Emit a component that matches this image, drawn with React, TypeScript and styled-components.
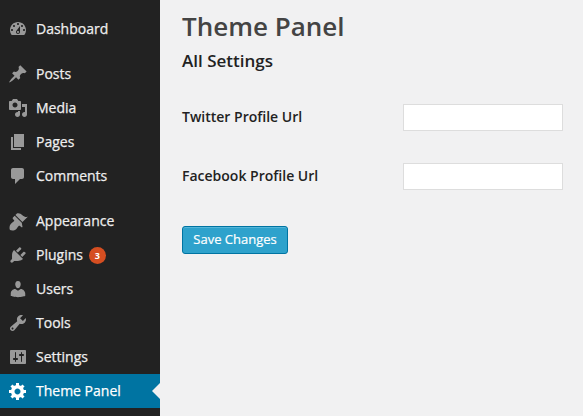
import React from 'react';
import styled, { createGlobalStyle } from 'styled-components';

const GlobalStyle = createGlobalStyle`
  html, body { margin: 0; padding: 0; height: 100%; background: #f1f1f2; overflow: hidden; }
  #root { height: 100%; }
  * { box-sizing: border-box; }
`;

const Layout = styled.div`
  display: flex;
  height: 416px;
  font-family: "Open Sans", "Liberation Sans", sans-serif;
`;

const Sidebar = styled.nav`
  width: 160px;
  flex-shrink: 0;
  padding-top: 12px;
  background: #222;
`;

const MenuGroup = styled.ul`
  margin: 0 0 11px;
  padding: 0;
  list-style: none;
`;

const MenuItem = styled.li<{ $active?: boolean }>`
  position: relative;
  display: flex;
  align-items: center;
  height: 34px;
  padding-left: 8px;
  gap: 8px;
  font-size: 14px;
  font-weight: 500;
  color: ${p => (p.$active ? '#fff' : '#eee')};
  background: ${p => (p.$active ? '#0074a2' : 'transparent')};

  svg {
    width: 20px;
    height: 20px;
    flex-shrink: 0;
    fill: ${p => (p.$active ? '#fff' : '#999')};
  }
`;

const MenuLabel = styled.span`
  margin-bottom: 2px;
  -webkit-text-stroke: 0.25px currentColor;
`;

const ActiveArrow = styled.span`
  position: absolute;
  right: 0;
  top: 50%;
  margin-top: -8px;
  border: 8px solid transparent;
  border-left-width: 0;
  border-right-color: #f1f1f2;
`;

const Badge = styled.span`
  display: inline-flex;
  align-items: center;
  justify-content: center;
  width: 17px;
  height: 17px;
  margin-left: -2px;
  border-radius: 50%;
  background: #d54e21;
  color: #fff;
  font-size: 9px;
  font-weight: 700;
`;

const Content = styled.main`
  flex: 1;
  padding: 0 20px 0 22px;
`;

const Title = styled.h1`
  margin: 0;
  padding-top: 7px;
  font-size: 26px;
  line-height: 38px;
  font-weight: 600;
  color: #444;
`;

const Subtitle = styled.h2`
  margin: 4px 0 0;
  font-size: 17px;
  line-height: 24px;
  font-weight: 600;
  color: #222;
`;

const FormRow = styled.div`
  display: grid;
  grid-template-columns: 221px 160px;
  align-items: center;
  height: 27px;
  margin-top: 32px;

  &:first-of-type {
    margin-top: 31px;
  }
`;

const FieldLabel = styled.label`
  margin-bottom: 2px;
  font-size: 14px;
  font-weight: 600;
  color: #222;
`;

const TextInput = styled.input`
  width: 160px;
  height: 27px;
  padding: 3px 5px;
  border: 1px solid #ddd;
  background: #fff;
  outline: none;
`;

const SaveButton = styled.button`
  display: block;
  width: 106px;
  height: 28px;
  margin-top: 36px;
  padding: 0 0 2px;
  border: 1px solid #0074a2;
  border-radius: 3px;
  background: #2ea2cc;
  box-shadow: inset 0 1px 0 rgba(120, 200, 230, 0.5);
  color: #fff;
  font-family: inherit;
  font-size: 13px;
  font-weight: 500;
  -webkit-text-stroke: 0.2px currentColor;
`;

const icons = {
  dashboard:
    'M3.76 16h12.48c1.1-1.37 1.76-3.11 1.76-5 0-4.42-3.58-8-8-8s-8 3.58-8 8c0 1.89.66 3.63 1.76 5zM10 4c.55 0 1 .45 1 1s-.45 1-1 1-1-.45-1-1 .45-1 1-1zM6 6c.55 0 1 .45 1 1s-.45 1-1 1-1-.45-1-1 .45-1 1-1zm8 0c.55 0 1 .45 1 1s-.45 1-1 1-1-.45-1-1 .45-1 1-1zm-5.37 5.55L12 7v6c0 1.1-.9 2-2 2s-2-.9-2-2c0-.57.24-1.08.63-1.45zM4 10c.55 0 1 .45 1 1s-.45 1-1 1-1-.45-1-1 .45-1 1-1zm12 0c.55 0 1 .45 1 1s-.45 1-1 1-1-.45-1-1 .45-1 1-1zm-5 3c0-.55-.45-1-1-1s-1 .45-1 1 .45 1 1 1 1-.45 1-1z',
  posts:
    'M10.44 3.02l1.82-1.82 6.36 6.35-1.83 1.82c-1.05-.68-2.48-.57-3.41.36l-.75.75c-.92.93-1.04 2.35-.35 3.41l-1.83 1.82-2.41-2.41-2.8 2.79c-.42.42-3.38 2.71-3.8 2.29s1.86-3.39 2.28-3.81l2.79-2.79L4.1 9.36l1.83-1.82c1.05.69 2.48.57 3.4-.36l.75-.75c.93-.92 1.05-2.35.36-3.41z',
  media:
    'M13 11V4c0-.55-.45-1-1-1h-1.67L9 1H5L3.67 3H2c-.55 0-1 .45-1 1v7c0 .55.45 1 1 1h10c.55 0 1-.45 1-1zM7 4.5c1.38 0 2.5 1.12 2.5 2.5S8.38 9.5 7 9.5 4.5 8.38 4.5 7 5.62 4.5 7 4.5zM14 6h5v10.5c0 1.38-1.12 2.5-2.5 2.5S14 17.88 14 16.5s1.12-2.5 2.5-2.5c.17 0 .34.02.5.05V9h-3V6zm-4 8.05V13h2v3.5c0 1.38-1.12 2.5-2.5 2.5S7 17.88 7 16.5 8.12 14 9.5 14c.17 0 .34.02.5.05z',
  pages: 'M6 15V2h10v13H6zm-1 1h8v2H3V5h2v11z',
  comments: 'M5 2h9c1.1 0 2 .9 2 2v7c0 1.1-.9 2-2 2h-2l-5 5v-5H5c-1.1 0-2-.9-2-2V4c0-1.1.9-2 2-2z',
  appearance:
    'M14.48 11.06L7.41 3.99l1.5-1.5c.5-.56 2.3-.47 3.51.32 1.21.8 1.43 1.28 2.91 2.1 1.18.64 2.45 1.26 4.45.85zm-.71.71L6.7 4.7 4.93 6.47c-.39.39-.39 1.02 0 1.41l1.06 1.06c.39.39.39 1.03 0 1.42-.6.6-1.43 1.11-2.21 1.69-.35.26-.7.53-1.01.84-1.34 1.34-1.65 4.51-.77 6.11 1.6.88 4.77.57 6.1-.77.31-.31.58-.66.84-1.01.58-.78 1.09-1.61 1.69-2.21.39-.39 1.03-.39 1.42 0l1.06 1.06c.39.39 1.02.39 1.41 0z',
  plugins:
    'M13.11 4.36L9.87 7.6 8 5.73l3.24-3.24c.35-.34 1.05-.2 1.56.32.52.51.66 1.21.31 1.55zm-8 1.77l.91-1.12 9.01 9.01-1.19.84c-.71.71-2.63 1.16-3.82 1.16H6.14L4.9 17.26c-.59.59-1.54.59-2.12 0-.59-.58-.59-1.53 0-2.12l1.24-1.24v-3.88c0-1.13.4-3.19 1.09-3.89zm7.26 3.97l3.24-3.24c.34-.35 1.04-.21 1.55.31.52.51.66 1.21.31 1.55l-3.24 3.25z',
  users:
    'M10 9.25c-2.27 0-2.73-3.44-2.73-3.44C7 4.02 7.82 2 9.97 2c2.16 0 2.98 2.02 2.71 3.81 0 0-.41 3.44-2.68 3.44zm0 2.57L12.72 10c2.39 0 4.52 2.33 4.52 4.53v2.49s-3.65 1.13-7.24 1.13c-3.65 0-7.24-1.13-7.24-1.13v-2.49c0-2.25 1.94-4.48 4.47-4.48z',
  tools:
    'M16.68 9.77c-1.34 1.34-3.3 1.67-4.95.99l-5.41 6.52c-.99.99-2.59.99-3.58 0s-.99-2.59 0-3.57l6.52-5.42c-.68-1.65-.35-3.61.99-4.95 1.28-1.28 3.12-1.62 4.72-1.06l-2.89 2.89 2.82 2.82 2.86-2.87c.53 1.58.18 3.39-1.08 4.65zM3.81 16.21c.4.39 1.04.39 1.43 0 .4-.4.4-1.04 0-1.43-.39-.4-1.03-.4-1.43 0-.39.39-.39 1.03 0 1.43z',
  settings:
    'M18 16V4c0-.55-.45-1-1-1H3c-.55 0-1 .45-1 1v12c0 .55.45 1 1 1h14c.55 0 1-.45 1-1zM8 11h1c.55 0 1 .45 1 1s-.45 1-1 1H8v1.5c0 .28-.22.5-.5.5s-.5-.22-.5-.5V13H6c-.55 0-1-.45-1-1s.45-1 1-1h1V5.5c0-.28.22-.5.5-.5s.5.22.5.5V11zm5-2h-1c-.55 0-1-.45-1-1s.45-1 1-1h1V5.5c0-.28.22-.5.5-.5s.5.22.5.5V7h1c.55 0 1 .45 1 1s-.45 1-1 1h-1v5.5c0 .28-.22.5-.5.5s-.5-.22-.5-.5V9z',
  gear:
    'M18 12h-2.18c-.17.7-.44 1.35-.81 1.93l1.54 1.54-2.1 2.1-1.54-1.54c-.58.36-1.23.63-1.91.79V19H8v-2.18c-.68-.16-1.33-.43-1.91-.79l-1.54 1.54-2.12-2.12 1.54-1.54c-.36-.58-.63-1.23-.79-1.91H1V9.03h2.17c.16-.7.44-1.35.8-1.94L2.43 5.55l2.1-2.1 1.54 1.54c.58-.37 1.24-.64 1.93-.81V2h3v2.18c.68.16 1.33.43 1.91.79l1.54-1.54 2.12 2.12-1.54 1.54c.36.59.64 1.24.8 1.94H18V12zm-8.5 1.5c1.66 0 3-1.34 3-3s-1.34-3-3-3-3 1.34-3 3 1.34 3 3 3z',
};

type IconName = keyof typeof icons;

const Icon = ({ name }: { name: IconName }) => (
  <svg viewBox="0 0 20 20" aria-hidden="true">
    <path d={icons[name]} fillRule="evenodd" />
  </svg>
);

interface NavEntry {
  label: string;
  icon: IconName;
  badge?: number;
  active?: boolean;
}

const navGroups: NavEntry[][] = [
  [{ label: 'Dashboard', icon: 'dashboard' }],
  [
    { label: 'Posts', icon: 'posts' },
    { label: 'Media', icon: 'media' },
    { label: 'Pages', icon: 'pages' },
    { label: 'Comments', icon: 'comments' },
  ],
  [
    { label: 'Appearance', icon: 'appearance' },
    { label: 'Plugins', icon: 'plugins', badge: 3 },
    { label: 'Users', icon: 'users' },
    { label: 'Tools', icon: 'tools' },
    { label: 'Settings', icon: 'settings' },
    { label: 'Theme Panel', icon: 'gear', active: true },
  ],
];

export default function App() {
  return (
    <Layout>
      <GlobalStyle />
      <Sidebar>
        {navGroups.map((group, i) => (
          <MenuGroup key={i}>
            {group.map(item => (
              <MenuItem key={item.label} $active={item.active}>
                <Icon name={item.icon} />
                <MenuLabel>{item.label}</MenuLabel>
                {item.badge && <Badge>{item.badge}</Badge>}
                {item.active && <ActiveArrow />}
              </MenuItem>
            ))}
          </MenuGroup>
        ))}
      </Sidebar>
      <Content>
        <Title>Theme Panel</Title>
        <Subtitle>All Settings</Subtitle>
        <FormRow>
          <FieldLabel>Twitter Profile Url</FieldLabel>
          <TextInput type="text" />
        </FormRow>
        <FormRow>
          <FieldLabel>Facebook Profile Url</FieldLabel>
          <TextInput type="text" />
        </FormRow>
        <SaveButton>Save Changes</SaveButton>
      </Content>
    </Layout>
  );
}
